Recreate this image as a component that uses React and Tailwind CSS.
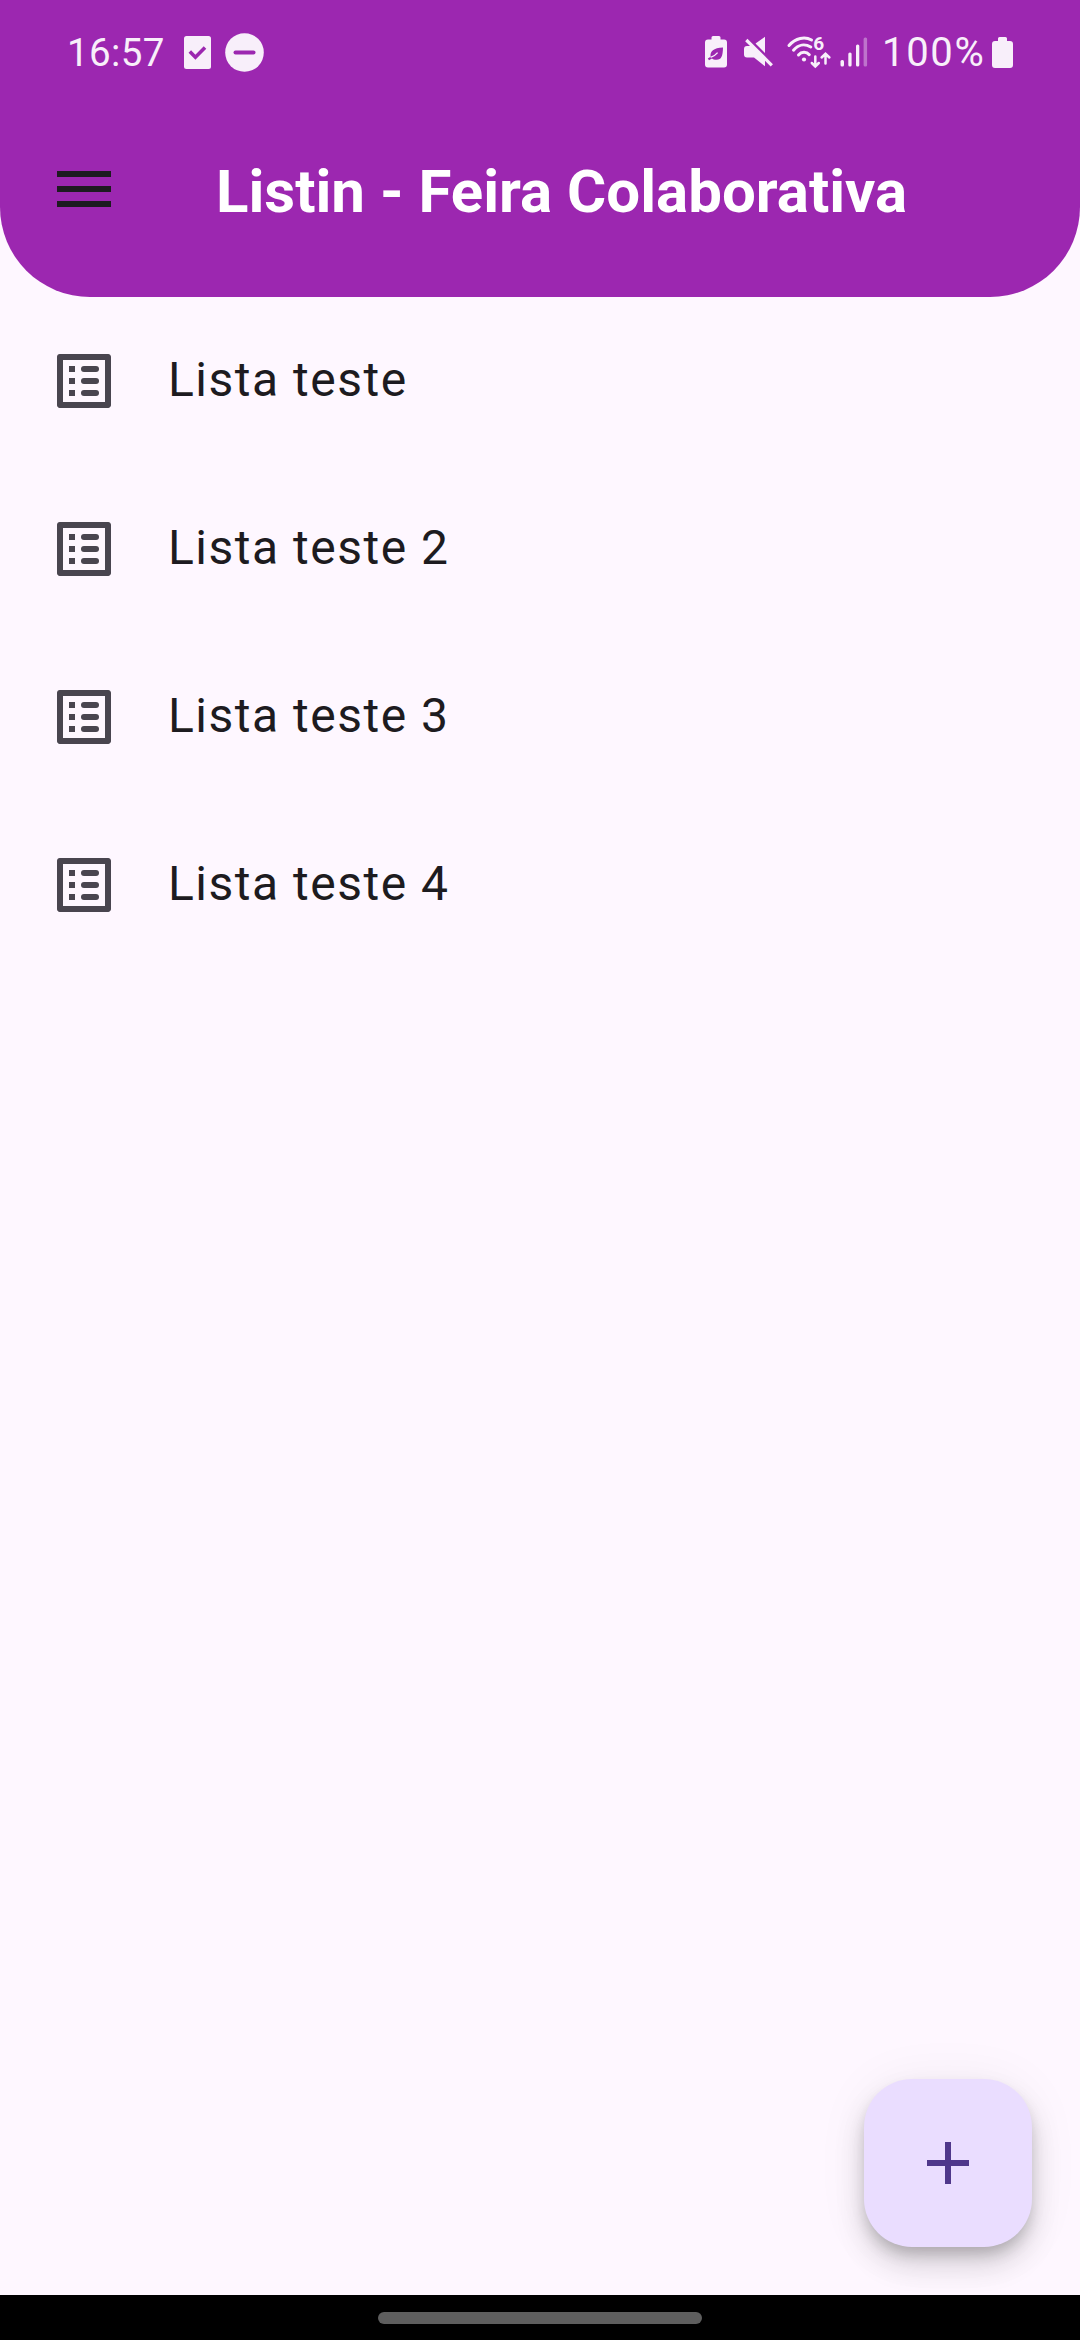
const lists = ["Lista teste", "Lista teste 2", "Lista teste 3", "Lista teste 4"];

function ClipboardCheck() {
  return (
    <svg className="ml-[20px] h-[33px] w-[27px]" viewBox="0 0 27 33">
      <rect width="27" height="33" rx="2.5" fill="#f8effa" />
      <path d="M5.8 15.6l5.6 5.6L21 11.6" fill="none" stroke="#9c27b0" strokeWidth="3.6" />
    </svg>
  );
}

function DoNotDisturb() {
  return (
    <svg className="ml-[14px] h-[39px] w-[39px]" viewBox="0 0 39 39">
      <circle cx="19.5" cy="19.5" r="19.3" fill="#f8effa" />
      <rect x="8.5" y="17.4" width="22" height="4.2" rx="2" fill="#9c27b0" />
    </svg>
  );
}

function BatteryLeaf() {
  return (
    <svg className="h-[32px] w-[22px]" viewBox="0 0 22 32">
      <path d="M6.5 3.5V1.5Q6.5 0 8 0h6Q15.5 0 15.5 1.5V3.5H19Q22 3.5 22 6.5V28.5Q22 31.5 19 31.5H3Q0 31.5 0 28.5V6.5Q0 3.5 3 3.5Z" fill="#f8effa" />
      <path d="M18 11.5C17.8 20 16.5 23.8 11.5 23.8c-2.2 0-3.6-.5-4.6-1.4L4 24.3 2.8 22.6l2.8-1.9C4.9 15.5 8.500 11.800 18 11.500Z" fill="#9c27b0" />
      <path d="M5.6 21.4c3-1 5.200-2.600 7-4.800" stroke="#f8effa" strokeWidth="1.3" fill="none" />
    </svg>
  );
}

function Muted() {
  return (
    <svg className="ml-[16px] h-[32px] w-[31px]" viewBox="0 0 31 32">
      <path d="M12.5 7.5L22 .8V17ZM1 13Q1 10 4 10H8.5L22 23.3V30.3L11 21.5H4Q1 21.5 1 18.5Z" fill="#f8effa" />
      <path d="M3.3 4L28.8 29.3" stroke="#f8effa" strokeWidth="3.2" />
    </svg>
  );
}

function Wifi6() {
  return (
    <svg className="ml-[13px] h-[32px] w-[44px] overflow-visible" viewBox="0 0 44 32" fill="none" stroke="#f8effa" strokeLinecap="round">
      <path d="M2 9.5C8.5 1.8 18 .4 24.5 4" strokeWidth="3" />
      <path d="M6.5 14.2C11.5 8.3 18 7.6 23.8 11" strokeWidth="3" />
      <path d="M11.5 19C14.5 15.5 19.5 15.4 22.3 18.7" strokeWidth="3" />
      <circle cx="17" cy="23.5" r="2.1" fill="#f8effa" stroke="none" />
      <text x="26.2" y="14" fill="#f8effa" stroke="none" fontFamily="Roboto, sans-serif" fontSize="19" fontWeight="700">6</text>
      <path d="M28.3 20.5V30M24.8 27L28.3 30.5 31.8 27M38.5 27.5V18.5M34.6 21.5L38.5 17.8 42.4 21.5" strokeWidth="2.5" />
    </svg>
  );
}

function Signal() {
  return (
    <svg className="ml-[9px] h-[30px] w-[28px]" viewBox="0 0 28 30" fill="#f8effa">
      <rect x="0.5" y="23" width="3.5" height="6.5" rx="1.5" />
      <rect x="8.3" y="15.5" width="3.3" height="14" rx="1.5" />
      <rect x="16" y="7.5" width="3.3" height="22" rx="1.5" />
      <rect x="23.6" y="0.5" width="3.5" height="29" rx="1.5" opacity="0.38" />
    </svg>
  );
}

function Battery() {
  return (
    <svg className="ml-[6px] h-[31px] w-[21px]" viewBox="0 0 21 31">
      <path d="M6 4V1.5Q6 0 7.5 0h6Q15 0 15 1.5V4H18Q21 4 21 7V28Q21 31 18 31H3Q0 31 0 28V7Q0 4 3 4Z" fill="#f8effa" />
    </svg>
  );
}

function ListIcon() {
  return (
    <svg className="size-[72px] shrink-0" viewBox="0 0 24 24" fill="#49454f">
      <path d="M20.1 3H3.9C3.4 3 3 3.4 3 3.9v16.2c0 .4.4.9.9.9h16.2c.4 0 .9-.5.9-.9V3.9c0-.5-.5-.9-.9-.9ZM19 19H5V5h14Z" />
      <path d="M7 7h2v2H7zM7 11h2v2H7zM7 15h2v2H7z" />
      <rect x="11" y="7" width="6" height="2" rx="1" />
      <rect x="11" y="11" width="6" height="2" rx="1" />
      <rect x="11" y="15" width="6" height="2" rx="1" />
    </svg>
  );
}

export default function App() {
  return (
    <div className="relative flex h-[2340px] w-[1080px] flex-col overflow-hidden bg-[#fef7ff] font-[Roboto,sans-serif]">
      <header className="h-[297px] shrink-0 rounded-b-[90px] bg-[#9c27b0]">
        <div className="flex h-[104px] items-center justify-between pr-[67px] pl-[67px] text-[#f8effa]">
          <div className="flex items-center">
            <span className="w-[97px] pt-[2px] text-[38.5px] leading-none tracking-[0.4px] whitespace-nowrap">16:57</span>
            <ClipboardCheck />
            <DoNotDisturb />
          </div>
          <div className="flex items-center">
            <BatteryLeaf />
            <Muted />
            <Wifi6 />
            <Signal />
            <span className="ml-[14px] w-[104px] pt-[2px] text-[40px] leading-none tracking-[1.7px] whitespace-nowrap">100%</span>
            <Battery />
          </div>
        </div>
        <div className="flex h-[170px] items-center pl-[48px]">
          <svg className="size-[72px] shrink-0" viewBox="0 0 24 24" fill="#1d1b20">
            <path d="M3 6h18v2H3zM3 11h18v2H3zM3 16h18v2H3z" />
          </svg>
          <h1 className="ml-[96px] pt-[5px] text-[60px] leading-none font-bold whitespace-nowrap text-white">Listin - Feira Colaborativa</h1>
        </div>
      </header>

      <ul className="flex flex-1 flex-col">
        {lists.map((name) => (
          <li key={name} className="flex h-[168px] items-center gap-[48px] pl-[48px]">
            <ListIcon />
            <span className="pb-[2px] text-[48px] leading-[72px] tracking-[1.5px] text-[#1d1b20]">{name}</span>
          </li>
        ))}
      </ul>

      <button className="absolute right-[48px] bottom-[93px] flex size-[168px] items-center justify-center rounded-[48px] bg-[#eaddff] shadow-[0_9px_15px_-3px_rgba(0,0,0,0.2),0_18px_30px_0_rgba(0,0,0,0.14),0_3px_54px_0_rgba(0,0,0,0.06)]">
        <svg className="size-[72px]" viewBox="0 0 24 24" fill="#4f378b">
          <path d="M19 13h-6v6h-2v-6H5v-2h6V5h2v6h6z" />
        </svg>
      </button>

      <footer className="relative flex h-[45px] shrink-0 justify-center bg-black pt-[17px]">
        <div className="h-[12px] w-[324px] rounded-full bg-[#5e5e5e]" />
      </footer>
    </div>
  );
}
